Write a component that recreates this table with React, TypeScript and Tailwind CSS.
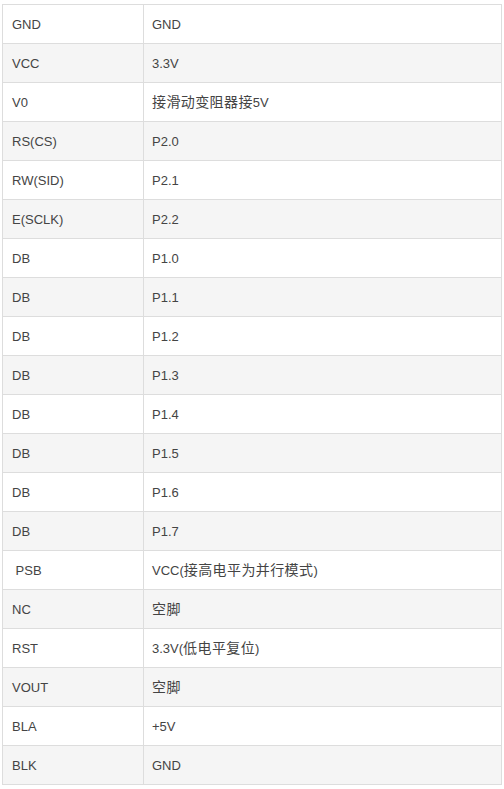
const rows: [string, string][] = [
  ["GND", "GND"],
  ["VCC", "3.3V"],
  ["V0", "接滑动变阻器接5V"],
  ["RS(CS)", "P2.0"],
  ["RW(SID)", "P2.1"],
  ["E(SCLK)", "P2.2"],
  ["DB", "P1.0"],
  ["DB", "P1.1"],
  ["DB", "P1.2"],
  ["DB", "P1.3"],
  ["DB", "P1.4"],
  ["DB", "P1.5"],
  ["DB", "P1.6"],
  ["DB", "P1.7"],
  ["\u00a0PSB", "VCC(接高电平为并行模式)"],
  ["NC", "空脚"],
  ["RST", "3.3V(低电平复位)"],
  ["VOUT", "空脚"],
  ["BLA", "+5V"],
  ["BLK", "GND"],
];

// CJK runs render a touch larger than the latin text in the source
function Cell({ text }: { text: string }) {
  const parts = text.split(/([\u4e00-\u9fff]+)/).filter(Boolean);
  return (
    <>
      {parts.map((p, i) =>
        /[\u4e00-\u9fff]/.test(p) ? (
          <span key={i} className="text-[14px] tracking-[0.4px]">{p}</span>
        ) : (
          <span key={i}>{p}</span>
        )
      )}
    </>
  );
}

export default function App() {
  return (
    <div className="bg-white min-h-[789px] pt-[4px] pl-[2px] font-['Liberation_Sans','Noto_Sans_CJK_SC',sans-serif] text-[13px] text-[#444]">
      <table className="w-[500px] border-collapse table-fixed">
        <colgroup>
          <col className="w-[141px]" />
          <col />
        </colgroup>
        <tbody>
          {rows.map(([pin, conn], i) => (
            <tr key={i} className={i % 2 === 1 ? "h-[39px] bg-[#f5f5f5]" : "h-[39px] bg-white"}>
              <td className="border border-[#dddddd] pl-[9px] pt-[1px] align-middle leading-[18px]">{pin}</td>
              <td className="border border-[#dddddd] pl-[8px] pt-[1px] align-middle leading-[18px]">
                <Cell text={conn} />
              </td>
            </tr>
          ))}
        </tbody>
      </table>
    </div>
  );
}
